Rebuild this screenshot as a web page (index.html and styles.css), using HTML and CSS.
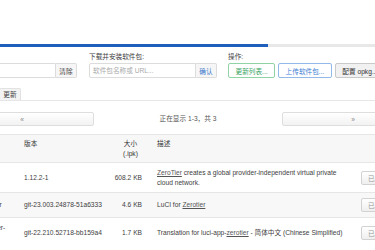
FILE: index.html
```html
<!DOCTYPE html>
<html lang="zh-CN">
<head>
    <meta charset="UTF-8">
    <meta name="viewport" content="width=device-width, initial-scale=1.0">
    <title>软件包</title>
    <link rel="stylesheet" href="styles.css">
</head>
<body>
    <div class="page">
        <div class="progress">
            <div class="progress-bar" style="width: 67%"></div>
        </div>

        <div class="controls">
            <div class="control ctl-filter">
                <label class="ctl-label">过滤器:</label>
                <div class="input-group">
                    <input type="text" class="txt txt-filter" value="zerotier">
                    <button class="btn-addon">清除</button>
                </div>
            </div>
            <div class="control ctl-download">
                <label class="ctl-label">下载并安装软件包:</label>
                <div class="input-group">
                    <input type="text" class="txt txt-url" placeholder="软件包名称或 URL...">
                    <button class="btn-addon addon-blue">确认</button>
                </div>
            </div>
            <div class="control ctl-actions">
                <label class="ctl-label">操作:</label>
                <div class="btn-row">
                    <button class="btn btn-green">更新列表...</button>
                    <button class="btn btn-blue">上传软件包...</button>
                    <button class="btn btn-gray">配置 opkg...</button>
                </div>
            </div>
        </div>

        <ul class="tabs">
            <li class="tab tab-active">已安装</li>
            <li class="tab">可用</li>
            <li class="tab">更新</li>
        </ul>

        <div class="pager">
            <button class="pager-btn pager-prev">«</button>
            <div class="pager-text">正在显示 1-3，共 3</div>
            <button class="pager-btn pager-next">»</button>
        </div>

        <table class="pkg-table">
            <colgroup>
                <col class="c-name">
                <col class="c-ver">
                <col class="c-size">
                <col class="c-desc">
                <col class="c-act">
            </colgroup>
            <tr class="row-head">
                <th class="col-name">软件包名称</th>
                <th>版本</th>
                <th class="col-size head-size">大小<br>(.ipk)</th>
                <th>描述</th>
                <th></th>
            </tr>
            <tr>
                <td class="col-name">zerotier</td>
                <td>1.12.2-1</td>
                <td class="col-size">608.2 KB</td>
                <td><a href="#" class="pkg-link">ZeroTier</a> creates a global provider-independent virtual private cloud network.</td>
                <td><button class="btn-inst">已安装</button></td>
            </tr>
            <tr class="row-alt">
                <td class="col-name">luci-app-zerotier</td>
                <td>git-23.003.24878-51a6333</td>
                <td class="col-size">4.6 KB</td>
                <td>LuCI for <a href="#" class="pkg-link">Zerotier</a></td>
                <td><button class="btn-inst">已安装</button></td>
            </tr>
            <tr>
                <td class="col-name">luci-i18n-zerotier-zh-cn</td>
                <td>git-22.210.52718-bb159a4</td>
                <td class="col-size">1.7 KB</td>
                <td>Translation for luci-app-<a href="#" class="pkg-link">zerotier</a> - 简体中文 (Chinese Simplified)</td>
                <td><button class="btn-inst">已安装</button></td>
            </tr>
        </table>
    </div>
</body>
</html>
```

FILE: styles.css
```css
*{
    margin: 0;
    padding: 0;
    box-sizing: border-box;
}

body{
    font-family: "Liberation Sans", "Noto Sans CJK SC", sans-serif;
    font-size: 6.65px;
    line-height: 9.5px;
    color: #404040;
    background: #fff;
    overflow: hidden;
}

/* the page is scrolled a little to the right */
.page{
    width: 474px;
    margin-left: -50px;
    padding-top: 44px;
}

.progress{
    height: 3px;
    background: #e8e8e8;
}

.progress-bar{
    height: 100%;
    background: #1f5fbc;
}

.controls{
    display: flex;
    align-items: flex-end;
    margin-top: 5px;
}

.ctl-download{
    margin-left: 12px;
}

.ctl-actions{
    margin-left: 11px;
}

.ctl-label{
    display: block;
    line-height: 10px;
    height: 10px;
    margin-bottom: 1px;
    color: #404040;
}

.input-group{
    display: flex;
}

.txt{
    height: 15px;
    border: 1px solid #dcdcdc;
    border-radius: 2px 0 0 2px;
    padding: 0 3px;
    font-family: inherit;
    font-size: 6.65px;
    color: #404040;
    outline: none;
}

.txt::placeholder{
    color: #a8a8a8;
}

.txt-filter{
    width: 106px;
}

.txt-url{
    width: 107px;
}

.btn-addon{
    width: 21px;
    height: 15px;
    border: 1px solid #dcdcdc;
    border-left: none;
    border-radius: 0 2px 2px 0;
    background: #f6f6f6;
    font-family: inherit;
    font-size: 6.65px;
    color: #444;
}

.addon-blue{
    color: #3b78cc;
}

.btn-row{
    display: flex;
    gap: 3px;
}

.btn{
    height: 15px;
    padding: 0 6.5px;
    border: 1px solid #ccc;
    border-radius: 2px;
    background: #fff;
    font-family: inherit;
    font-size: 6.65px;
    white-space: nowrap;
}

.btn-green{
    border-color: #8fd3a6;
    color: #3aa464;
}

.btn-blue{
    border-color: #93b9ea;
    color: #3d7dd4;
}

.btn-gray{
    border-color: #c9c9c9;
    background: #f1f1f1;
    color: #333;
}

.tabs{
    list-style: none;
    display: flex;
    margin-top: 10px;
    border-bottom: 1px solid #e6e6e6;
}

.tab{
    line-height: 11px;
    padding: 0 3px;
    border: 1px solid #e2e2e2;
    border-bottom: none;
    border-radius: 2px 2px 0 0;
    background: #f3f3f3;
    color: #444;
}

.tab-active{
    background: #fff;
}

.pager{
    display: flex;
    align-items: flex-start;
    height: 33px;
    padding-top: 11px;
}

.pager-btn{
    height: 14px;
    border: 1px solid #dedede;
    border-radius: 2px;
    background: linear-gradient(#fff, #f2f2f2);
    font-family: inherit;
    font-size: 6.65px;
    color: #888;
}

.pager-prev{
    flex: 0 0 144px;
}

.pager-next{
    flex: 0 0 142px;
}

.pager-text{
    flex: 1;
    text-align: center;
    line-height: 14px;
    color: #555;
}

.pkg-table{
    width: 474px;
    table-layout: fixed;
    border-collapse: collapse;
}

.c-name{ width: 70px; }
.c-ver{ width: 90px; }
.c-size{ width: 43px; }
.c-desc{ width: 204px; }
.c-act{ width: 67px; }

.pkg-table th,
.pkg-table td{
    padding: 5px 4px;
    border-top: 1px solid #e6e6e6;
    text-align: left;
    vertical-align: middle;
    font-weight: normal;
}

.pkg-table th{
    padding-top: 4px;
    padding-bottom: 4px;
    vertical-align: top;
    color: #333;
}

.row-head{
    background: #f7f7f7;
}

.row-alt{
    background: #f8f8f8;
}

.pkg-table .col-name{
    padding-right: 10px;
}

.pkg-table .col-size{
    text-align: right;
    padding-right: 11px;
}

.pkg-table .head-size{
    text-align: center;
    padding-right: 6px;
}

.pkg-link{
    color: #555;
    text-decoration: underline;
}

.btn-inst{
    display: block;
    height: 14px;
    padding: 0 6px;
    border: 1px solid #d2d2d2;
    border-radius: 2px;
    background: linear-gradient(#fff, #efefef);
    font-family: inherit;
    font-size: 6.65px;
    color: #999;
    white-space: nowrap;
}
```
